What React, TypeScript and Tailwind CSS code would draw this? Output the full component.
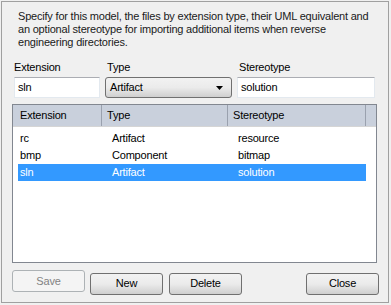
import React from "react";

const rows = [
  { ext: "rc", type: "Artifact", stereo: "resource" },
  { ext: "bmp", type: "Component", stereo: "bitmap" },
  { ext: "sln", type: "Artifact", stereo: "solution", selected: true },
];

function Btn({ label, disabled }: { label: string; disabled?: boolean }) {
  return (
    <button
      className={`w-[73px] h-[22px] rounded-[3px] border text-[11px] leading-none ${
        disabled
          ? "border-[#adb2b5] bg-[#f4f4f4] text-[#838383]"
          : "border-[#707070] bg-gradient-to-b from-[#f2f2f2] via-[#ebebeb] to-[#cfcfcf] text-black"
      }`}
    >
      {label}
    </button>
  );
}

export default function App() {
  return (
    <div
      className="w-[391px] h-[305px] bg-[#f0f0f0] pt-[1px] pl-[1px] tracking-[-0.2px]"
      style={{ fontFamily: '"Liberation Sans", Arial, sans-serif' }}
    >
      <div className="w-[388px] h-[302px] border border-[#a0a0a0] flex flex-col pl-[10px]">
        <p className="text-[11px] leading-[13px] text-[#1a1a1a] pl-[6px] pt-[8px] whitespace-nowrap">
          Specify for this model, the files by extension type, their UML equivalent and
          <br />
          an optional stereotype for importing additional items when reverse
          <br />
          engineering directories.
        </p>

        <div className="flex mt-[12px] pl-[2px] gap-[5px] text-[11px]">
          <div className="flex flex-col w-[86px]">
            <span className="leading-[13px] mb-[3px]">Extension</span>
            <div className="h-[21px] bg-white border border-[#e3e9ef] border-t-[#abadb3] flex items-center px-[3px]">
              sln
            </div>
          </div>
          <div className="flex flex-col w-[127px]">
            <span className="leading-[13px] mb-[3px] pl-[2px]">Type</span>
            <div className="h-[21px] rounded-[3px] border border-[#707070] bg-gradient-to-b from-[#f2f2f2] via-[#ebebeb] to-[#cfcfcf] flex items-center justify-between px-[4px]">
              <span>Artifact</span>
              <svg width="7" height="4" viewBox="0 0 7 4" className="mr-[4px]">
                <path d="M0 0h7L3.5 4z" fill="#000" />
              </svg>
            </div>
          </div>
          <div className="flex flex-col w-[138px]">
            <span className="leading-[13px] mb-[3px] pl-[2px]">Stereotype</span>
            <div className="h-[21px] bg-white border border-[#e3e9ef] border-t-[#abadb3] flex items-center px-[3px]">
              solution
            </div>
          </div>
        </div>

        <div className="mt-[6px] w-[365px] h-[159px] border border-[#828790] bg-white text-[11px] flex flex-col">
          <div className="flex h-[22px] bg-[#c9d0dc] border-b border-[#d5d5d5]">
            <div className="w-[89px] border-r border-[#9aa1ae] flex items-center pl-[7px]">Extension</div>
            <div className="w-[126px] border-r border-[#9aa1ae] flex items-center pl-[5px]">Type</div>
            <div className="w-[138px] border-r border-[#9aa1ae] flex items-center pl-[5px]">Stereotype</div>
          </div>
          <div className="pt-[3px] pl-[5px]">
            {rows.map((r) => (
              <div
                key={r.ext}
                className={`flex h-[17px] items-center w-[348px] ${
                  r.selected ? "bg-[#3399ff] text-white" : "text-black"
                }`}
              >
                <span className="w-[89px] pl-[2px]">{r.ext}</span>
                <span className="w-[126px] pl-[5px]">{r.type}</span>
                <span className="pl-[5px]">{r.stereo}</span>
              </div>
            ))}
          </div>
        </div>

        <div className="flex mt-[7px] w-[367px]">
          <Btn label="Save" disabled />
          <div className="ml-[5px]">
            <Btn label="New" />
          </div>
          <div className="ml-[6px]">
            <Btn label="Delete" />
          </div>
          <div className="ml-auto">
            <Btn label="Close" />
          </div>
        </div>
      </div>
    </div>
  );
}
